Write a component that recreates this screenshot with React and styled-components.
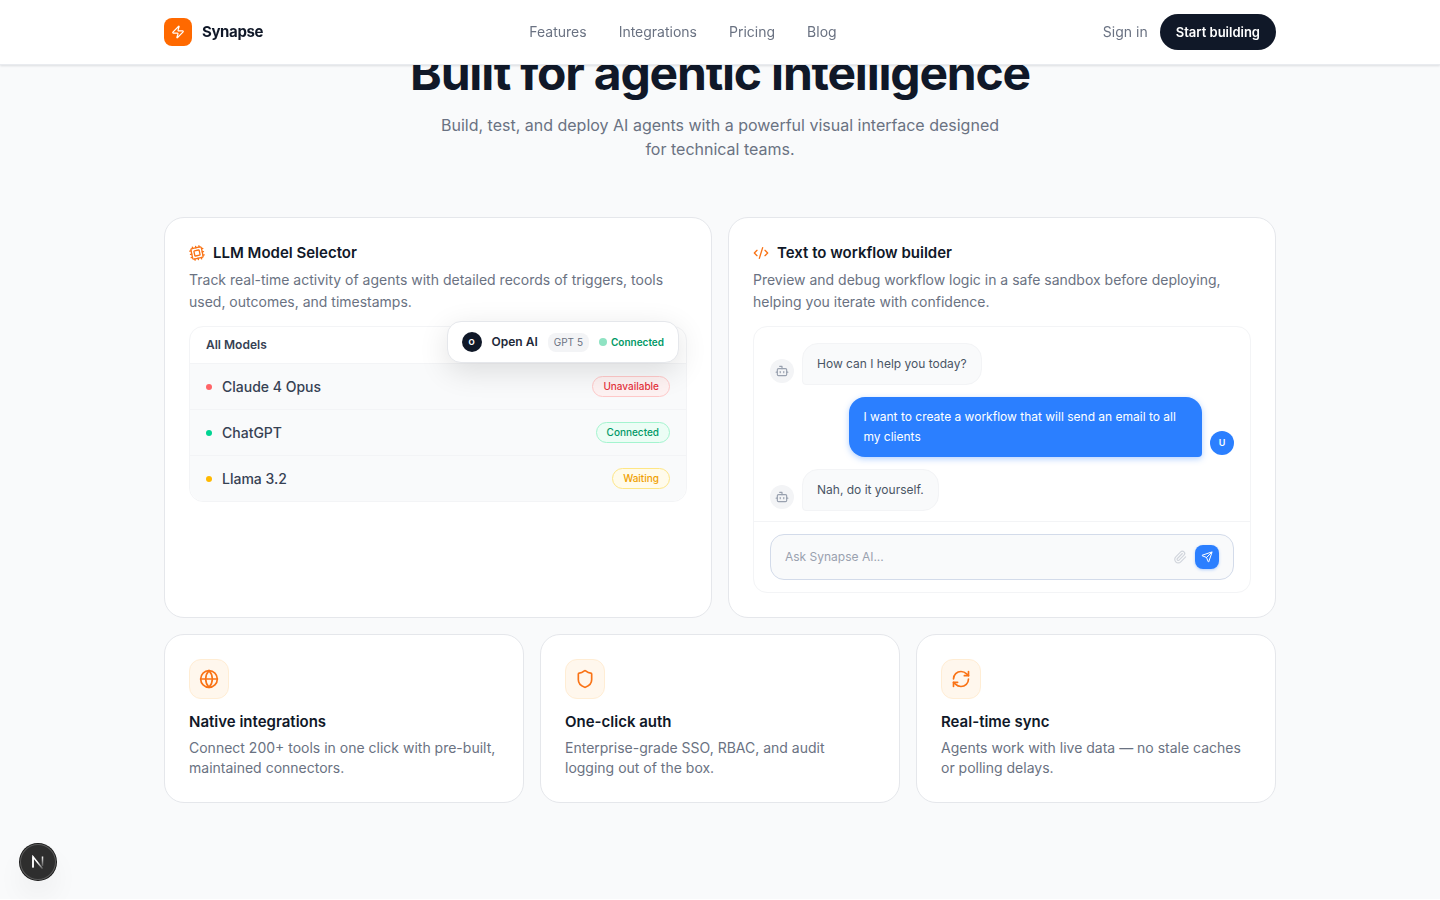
import React from "react";
import styled, { createGlobalStyle } from "styled-components";
import { Bot, CodeXml, Cpu, Globe, Paperclip, RefreshCw, Send, Shield, Zap } from "lucide-react";

const GlobalStyle = createGlobalStyle`
  *, *::before, *::after { box-sizing: border-box; }
  body {
    margin: 0;
    background: #ffffff;
    color: #101828;
    font-family: Inter, "Liberation Sans", sans-serif;
    font-size: 14px;
    line-height: 20px;
    -webkit-font-smoothing: antialiased;
  }
  h1, h2, h3, p, ul { margin: 0; padding: 0; }
  ul { list-style: none; }
  a { color: inherit; text-decoration: none; }
  button, input { font: inherit; }
  svg { display: block; flex: none; }
`;

const Header = styled.header`
  position: fixed;
  inset: 0 0 auto;
  z-index: 10;
  background: #ffffff;
  border-bottom: 1px solid #e9ebef;
  box-shadow: 0 1px 2px rgba(16, 24, 40, 0.12);
`;

const Container = styled.div`
  max-width: 1160px;
  margin: 0 auto;
  padding: 0 24px;
`;

const HeaderBar = styled(Container)`
  display: flex;
  align-items: center;
  justify-content: space-between;
  height: 64px;
`;

const Brand = styled.a`
  display: flex;
  align-items: center;
  gap: 10px;
  font-size: 15px;
  font-weight: 700;
  letter-spacing: -0.025em;
`;

const BrandMark = styled.span`
  display: grid;
  place-items: center;
  width: 28px;
  height: 28px;
  border-radius: 8px;
  background: #ff6900;
  color: #ffffff;
`;

const Nav = styled.nav`
  display: flex;
  gap: 32px;
  color: #6a7282;
`;

const Actions = styled.div`
  display: flex;
  align-items: center;
  gap: 12px;
  color: #6a7282;
`;

const StartButton = styled.button`
  height: 36px;
  padding: 0 16px;
  border: 0;
  border-radius: 18px;
  background: #101828;
  color: #ffffff;
  font-size: 13px;
  line-height: 18px;
  font-weight: 600;
`;

const Section = styled.main`
  padding: 48px 0 96px;
  background: #f9fafb;
`;

const Intro = styled.div`
  max-width: 576px;
  margin: 0 auto 56px;
  text-align: center;
`;

const Heading = styled.h1`
  font-size: 48px;
  line-height: 50px;
  font-weight: 700;
  letter-spacing: -0.025em;
  white-space: nowrap;
  display: flex;
  justify-content: center;
`;

const Lead = styled.p`
  margin-top: 15px;
  font-size: 16px;
  line-height: 24px;
  color: #6a7282;
`;

const CardGrid = styled.div`
  display: grid;
  grid-template-columns: repeat(${(p) => p.$columns}, minmax(0, 1fr));
  gap: 16px;
  & + & { margin-top: 16px; }
`;

const Card = styled.article`
  padding: 24px;
  border: 1px solid #e5e7eb;
  border-radius: 20px;
  background: #ffffff;
`;

const CardTitle = styled.h2`
  display: flex;
  align-items: center;
  gap: 8px;
  font-size: 15px;
  line-height: 22px;
  font-weight: 600;
  svg { color: #f97316; }
`;

const CardText = styled.p`
  margin-top: 5px;
  line-height: ${(p) => (p.$loose ? 22 : 20)}px;
  color: #6a7282;
`;

const TurnedCpu = styled(Cpu)`
  transform: rotate(-12deg);
`;

const Panel = styled.div`
  position: relative;
  margin-top: 13px;
  border: 1px solid #f3f4f6;
  border-radius: 14px;
`;

const PanelHead = styled.h3`
  padding: 8px 16px;
  border-bottom: 1px solid #f3f4f6;
  font-size: 12px;
  line-height: 20px;
  font-weight: 600;
  color: #364153;
`;

const ModelList = styled.ul`
  border-radius: 0 0 14px 14px;
  background: #f9fafb;
`;

const ModelRow = styled.li`
  display: flex;
  align-items: center;
  gap: 10px;
  padding: 12px 16px;
  font-weight: 500;
  color: #364153;
  & + & { border-top: 1px solid #f3f4f6; }
`;

const Dot = styled.span`
  width: ${(p) => p.$size || 6}px;
  height: ${(p) => p.$size || 6}px;
  border-radius: 50%;
  background: ${(p) => p.$color};
`;

const tones = {
  red: { dot: "#ff6467", text: "#e5343d", fill: "#fef2f2", line: "#ffc9c9" },
  green: { dot: "#00d492", text: "#009966", fill: "#ecfdf5", line: "#a4f4cf" },
  amber: { dot: "#ffb900", text: "#f0a000", fill: "#fffbeb", line: "#fee685" },
};

const StatusPill = styled.span`
  margin-left: auto;
  padding: 2px 10px;
  border: 1px solid ${(p) => tones[p.$tone].line};
  border-radius: 11px;
  background: ${(p) => tones[p.$tone].fill};
  color: ${(p) => tones[p.$tone].text};
  font-size: 10px;
  line-height: 15px;
  font-weight: 500;
`;

const FloatingModel = styled.div`
  position: absolute;
  top: -6px;
  right: 7px;
  display: flex;
  align-items: center;
  gap: 10px;
  height: 42px;
  padding: 0 14px;
  border: 1px solid #e5e7eb;
  border-radius: 14px;
  background: #ffffff;
  box-shadow: 0 8px 30px rgba(0, 0, 0, 0.12);
`;

const ModelBadge = styled.span`
  display: grid;
  place-items: center;
  width: 20px;
  height: 20px;
  border-radius: 50%;
  background: #101828;
  color: #ffffff;
  font-size: 8px;
  line-height: 12px;
  font-weight: 700;
`;

const ModelName = styled.strong`
  font-size: 12px;
  font-weight: 600;
  color: #1e2939;
`;

const VersionTag = styled.span`
  padding: 2px 6px;
  border-radius: 8px;
  background: #f3f4f6;
  color: #6a7282;
  font-size: 10px;
  line-height: 15px;
`;

const LiveStatus = styled.span`
  display: flex;
  align-items: center;
  gap: 4px;
  color: #009966;
  font-size: 10px;
  font-weight: 600;
`;

const Messages = styled.div`
  display: flex;
  flex-direction: column;
  gap: 12px;
  padding: 16px 16px 10px;
`;

const Message = styled.div`
  display: flex;
  align-items: flex-end;
  justify-content: ${(p) => (p.$mine ? "flex-end" : "flex-start")};
  gap: 8px;
`;

const Avatar = styled.span`
  display: grid;
  place-items: center;
  flex: none;
  width: 24px;
  height: 24px;
  margin-bottom: 2px;
  border-radius: 50%;
  background: ${(p) => (p.$mine ? "#2b7fff" : "#f3f4f6")};
  color: ${(p) => (p.$mine ? "#ffffff" : "#99a1af")};
  font-size: 9px;
  line-height: 12px;
  font-weight: 600;
`;

const BotBubble = styled.p`
  padding: 10px 14px;
  border: 1px solid #f3f4f6;
  border-radius: 16px 16px 16px 4px;
  background: #f9fafb;
  color: #4a5565;
  font-size: 12px;
`;

const UserBubble = styled.p`
  max-width: 76%;
  padding: 10px 14px;
  border-radius: 16px 16px 4px 16px;
  background: #2b7fff;
  box-shadow: 0 2px 6px rgba(43, 127, 255, 0.35);
  color: #ffffff;
  font-size: 12px;
`;

const Composer = styled.form`
  padding: 12px 16px;
  border-top: 1px solid #f3f4f6;
`;

const ComposerBox = styled.div`
  display: flex;
  align-items: center;
  gap: 8px;
  padding: 10px 14px;
  border: 1px solid #d3dbea;
  border-radius: 14px;
  background: #f9fafb;
`;

const ComposerInput = styled.input`
  flex: 1;
  min-width: 0;
  padding: 0;
  border: 0;
  outline: 0;
  background: transparent;
  font-size: 12px;
  &::placeholder { color: #99a1af; opacity: 1; }
`;

const AttachButton = styled.button`
  padding: 0;
  border: 0;
  background: none;
  color: #d1d5dc;
`;

const SendButton = styled.button`
  display: grid;
  place-items: center;
  width: 24px;
  height: 24px;
  padding: 0;
  border: 0;
  border-radius: 8px;
  background: #2b7fff;
  box-shadow: 0 1px 3px rgba(43, 127, 255, 0.35);
  color: #ffffff;
`;

const IconTile = styled.div`
  display: grid;
  place-items: center;
  width: 40px;
  height: 40px;
  margin-bottom: 12px;
  border: 1px solid #ffedd4;
  border-radius: 12px;
  background: #fff7ed;
  color: #f97316;
`;

const DevBadge = styled.button`
  position: fixed;
  left: 20px;
  bottom: 20px;
  display: grid;
  place-items: center;
  width: 36px;
  height: 36px;
  padding: 0;
  border: 0;
  border-radius: 50%;
  background: #2e2e2e;
  box-shadow: 0 0 0 1px #171717, inset 0 0 0 1px #5a5a5a, 0 16px 32px -8px rgba(0, 0, 0, 0.16);
`;

const models = [
  { name: "Claude 4 Opus", status: "Unavailable", tone: "red" },
  { name: "ChatGPT", status: "Connected", tone: "green" },
  { name: "Llama 3.2", status: "Waiting", tone: "amber" },
];

const features = [
  { icon: Globe, title: "Native integrations", text: "Connect 200+ tools in one click with pre-built, maintained connectors." },
  { icon: Shield, title: "One-click auth", text: "Enterprise-grade SSO, RBAC, and audit logging out of the box." },
  { icon: RefreshCw, title: "Real-time sync", text: "Agents work with live data — no stale caches or polling delays." },
];

function BotMessage({ children }) {
  return (
    <Message>
      <Avatar><Bot size={14} strokeWidth={2} /></Avatar>
      <BotBubble>{children}</BotBubble>
    </Message>
  );
}

function NextMark() {
  return (
    <svg width="14" height="14" viewBox="0 0 14 14" fill="none" aria-hidden="true">
      <defs>
        <linearGradient id="stem" x1="0" y1="1" x2="0" y2="12" gradientUnits="userSpaceOnUse">
          <stop stopColor="#fff" />
          <stop offset="1" stopColor="#fff" stopOpacity="0.1" />
        </linearGradient>
        <linearGradient id="slash" x1="7" y1="7" x2="12" y2="13" gradientUnits="userSpaceOnUse">
          <stop stopColor="#fff" />
          <stop offset="1" stopColor="#fff" stopOpacity="0.2" />
        </linearGradient>
      </defs>
      <path d="M2 12.5V1.7l9.6 12" stroke="url(#slash)" strokeWidth="1.5" />
      <path d="M2 12.5V1.5" stroke="#fff" strokeWidth="1.5" />
      <path d="M11.5 1.5V11" stroke="url(#stem)" strokeWidth="1.5" />
    </svg>
  );
}

export default function App() {
  return (
    <>
      <GlobalStyle />
      <Header>
        <HeaderBar>
          <Brand href="#">
            <BrandMark><Zap size={14} strokeWidth={2} /></BrandMark>
            Synapse
          </Brand>
          <Nav aria-label="Main">
            <a href="#features">Features</a>
            <a href="#integrations">Integrations</a>
            <a href="#pricing">Pricing</a>
            <a href="#blog">Blog</a>
          </Nav>
          <Actions>
            <a href="#signin">Sign in</a>
            <StartButton type="button">Start building</StartButton>
          </Actions>
        </HeaderBar>
      </Header>

      <Section id="features">
        <Container>
          <Intro>
            <Heading>Built for agentic intelligence</Heading>
            <Lead>Build, test, and deploy AI agents with a powerful visual interface designed for technical teams.</Lead>
          </Intro>

          <CardGrid $columns={2}>
            <Card>
              <CardTitle><TurnedCpu size={16} />LLM Model Selector</CardTitle>
              <CardText $loose>
                Track real-time activity of agents with detailed records of triggers, tools used, outcomes, and timestamps.
              </CardText>
              <Panel>
                <PanelHead>All Models</PanelHead>
                <ModelList>
                  {models.map((m) => (
                    <ModelRow key={m.name}>
                      <Dot $color={tones[m.tone].dot} />
                      {m.name}
                      <StatusPill $tone={m.tone}>{m.status}</StatusPill>
                    </ModelRow>
                  ))}
                </ModelList>
                <FloatingModel>
                  <ModelBadge>O</ModelBadge>
                  <ModelName>Open AI</ModelName>
                  <VersionTag>GPT 5</VersionTag>
                  <LiveStatus><Dot $size={8} $color="#8fe3c3" />Connected</LiveStatus>
                </FloatingModel>
              </Panel>
            </Card>

            <Card>
              <CardTitle><CodeXml size={16} />Text to workflow builder</CardTitle>
              <CardText $loose>
                Preview and debug workflow logic in a safe sandbox before deploying, helping you iterate with confidence.
              </CardText>
              <Panel>
                <Messages>
                  <BotMessage>How can I help you today?</BotMessage>
                  <Message $mine>
                    <UserBubble>I want to create a workflow that will send an email to all my clients</UserBubble>
                    <Avatar $mine>U</Avatar>
                  </Message>
                  <BotMessage>Nah, do it yourself.</BotMessage>
                </Messages>
                <Composer onSubmit={(e) => e.preventDefault()}>
                  <ComposerBox>
                    <ComposerInput aria-label="Message" placeholder="Ask Synapse AI..." />
                    <AttachButton type="button" aria-label="Attach file"><Paperclip size={14} /></AttachButton>
                    <SendButton type="submit" aria-label="Send"><Send size={12} /></SendButton>
                  </ComposerBox>
                </Composer>
              </Panel>
            </Card>
          </CardGrid>

          <CardGrid $columns={3}>
            {features.map(({ icon: Icon, title, text }) => (
              <Card key={title}>
                <IconTile><Icon size={20} strokeWidth={2} /></IconTile>
                <CardTitle>{title}</CardTitle>
                <CardText>{text}</CardText>
              </Card>
            ))}
          </CardGrid>
        </Container>
      </Section>

      <DevBadge type="button" aria-label="Open developer tools"><NextMark /></DevBadge>
    </>
  );
}
